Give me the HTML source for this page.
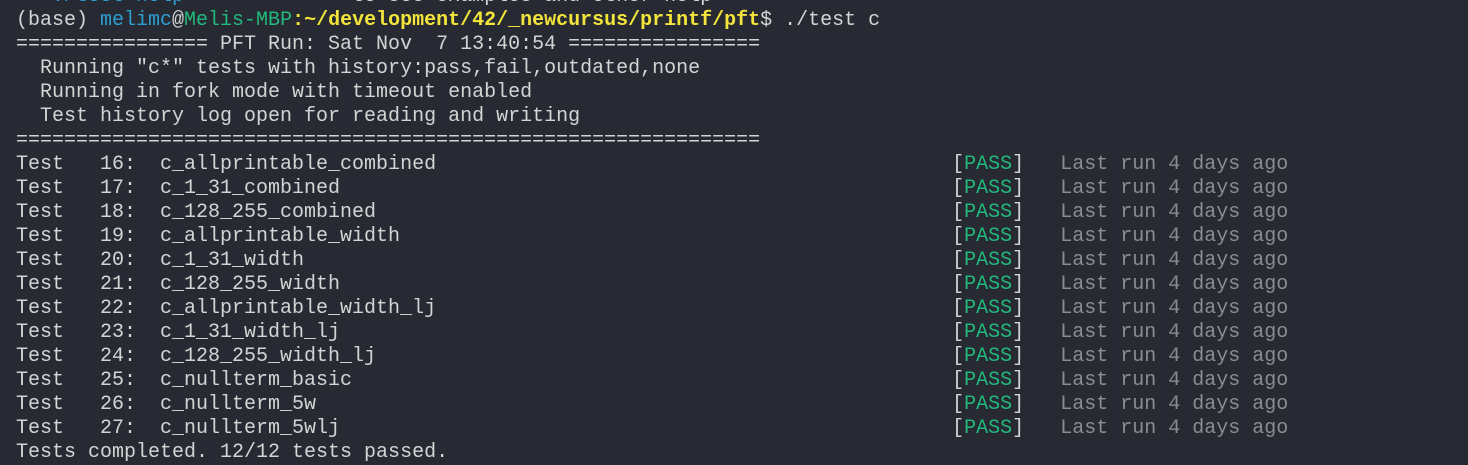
<!DOCTYPE html>
<html><head><style>
html,body{margin:0;padding:0;background:#272a32;width:1468px;height:464px;overflow:hidden}
pre{margin:0;position:absolute;left:16px;top:-15px;font-family:"Liberation Mono",monospace;font-size:20px;line-height:24px;color:#d4d4d4;white-space:pre}
.b{color:#2b9fd2}.g{color:#22b97c}.y{color:#f2e43a;font-weight:bold}.d{color:#8a8c92}
</style></head><body><pre>   <span class="b">./test help</span>              to see examples and other help
(base) <span class="b">melimc</span>@<span class="g">Melis-MBP</span><span class="y">:~/development/42/_newcursus/printf/pft</span>$ ./test c
================ PFT Run: Sat Nov  7 13:40:54 ================
  Running "c*" tests with history:pass,fail,outdated,none
  Running in fork mode with timeout enabled
  Test history log open for reading and writing
==============================================================
Test   16:  c_allprintable_combined                                           [<span class="g">PASS</span>]   <span class="d">Last run 4 days ago</span>
Test   17:  c_1_31_combined                                                   [<span class="g">PASS</span>]   <span class="d">Last run 4 days ago</span>
Test   18:  c_128_255_combined                                                [<span class="g">PASS</span>]   <span class="d">Last run 4 days ago</span>
Test   19:  c_allprintable_width                                              [<span class="g">PASS</span>]   <span class="d">Last run 4 days ago</span>
Test   20:  c_1_31_width                                                      [<span class="g">PASS</span>]   <span class="d">Last run 4 days ago</span>
Test   21:  c_128_255_width                                                   [<span class="g">PASS</span>]   <span class="d">Last run 4 days ago</span>
Test   22:  c_allprintable_width_lj                                           [<span class="g">PASS</span>]   <span class="d">Last run 4 days ago</span>
Test   23:  c_1_31_width_lj                                                   [<span class="g">PASS</span>]   <span class="d">Last run 4 days ago</span>
Test   24:  c_128_255_width_lj                                                [<span class="g">PASS</span>]   <span class="d">Last run 4 days ago</span>
Test   25:  c_nullterm_basic                                                  [<span class="g">PASS</span>]   <span class="d">Last run 4 days ago</span>
Test   26:  c_nullterm_5w                                                     [<span class="g">PASS</span>]   <span class="d">Last run 4 days ago</span>
Test   27:  c_nullterm_5wlj                                                   [<span class="g">PASS</span>]   <span class="d">Last run 4 days ago</span>
Tests completed. 12/12 tests passed.</pre></body></html>
